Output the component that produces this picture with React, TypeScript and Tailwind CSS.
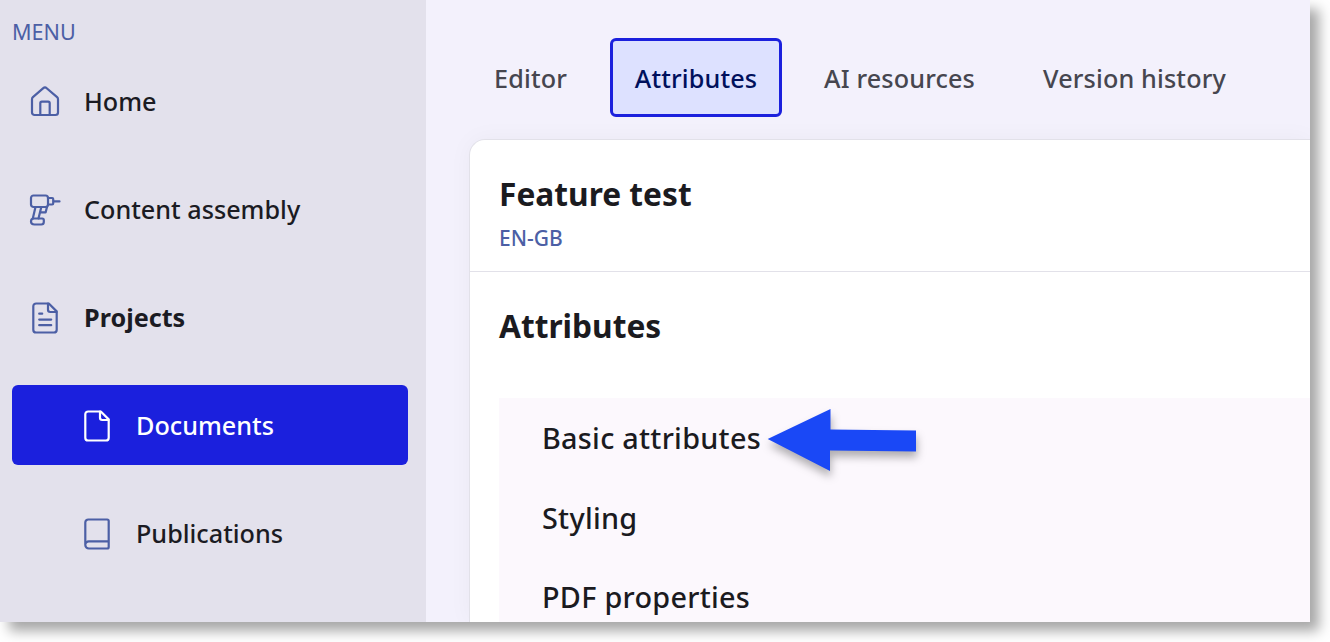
import React from "react";
import clsx from "clsx";

type IconProps = {
  className?: string;
};

type NavItemProps = {
  label: string;
  icon: React.ReactNode;
  nested?: boolean;
  active?: boolean;
  bold?: boolean;
};

const iconProps = {
  width: 32,
  height: 32,
  viewBox: "0 0 32 32",
  fill: "none",
  stroke: "currentColor",
  strokeWidth: 2.2,
  strokeLinecap: "round" as const,
  strokeLinejoin: "round" as const,
};

const HomeIcon = ({ className }: IconProps) => (
  <svg {...iconProps} className={className}>
    <path d="M3 13.200c0-.8.300-1.500.9-2L14.300 2.200c1-.9 2.400-.9 3.400 0L28.100 11.200c.6.500.9 1.200.9 2V26.500a2.500 2.500 0 0 1-2.500 2.500H5.500A2.500 2.500 0 0 1 3 26.500z" />
    <path d="M11.300 29V17.200a1.500 1.500 0 0 1 1.500-1.500h6.400a1.500 1.500 0 0 1 1.500 1.500V29" />
  </svg>
);

const DrillIcon = ({ className }: IconProps) => (
  <svg {...iconProps} className={className}>
    <rect x="2" y="1.500" width="17" height="11.500" rx="2.500" />
    <path d="M19 4h4.200a1 1 0 0 1 1 1v4.500a1 1 0 0 1-1 1H19M24.200 7.400h6.300" />
    <path d="M6.500 13L3.800 24.500M12.300 13L9.500 24.500M18 13l-1.400 5.400H11.200" />
    <path d="M4.800 24.500h8.500a1.500 1.500 0 0 1 1.500 1.500v2a2.500 2.500 0 0 1-2.500 2.500H5.500c-2 0-3.500-1.200-3.500-3 0-1.700 1.100-3 2.800-3z" />
  </svg>
);

const FileOutline = () => (
  <>
    <path d="M7.100 1.500H19.800L27.700 9.400V27.700a2.800 2.800 0 0 1-2.800 2.800H7.100a2.800 2.800 0 0 1-2.800-2.800V4.300a2.800 2.800 0 0 1 2.800-2.800z" />
    <path d="M19 1.700V7.800a2.200 2.200 0 0 0 2.200 2.200H27.500" />
  </>
);

const FileIcon = ({ className }: IconProps) => (
  <svg {...iconProps} className={className}>
    <FileOutline />
  </svg>
);

const FileTextIcon = ({ className }: IconProps) => (
  <svg {...iconProps} className={className}>
    <FileOutline />
    <path d="M10.200 11.700h3M10.200 17.600h12M10.200 23.200h12" />
  </svg>
);

const BookIcon = ({ className }: IconProps) => (
  <svg {...iconProps} className={className}>
    <path d="M4.300 27V4.500a3 3 0 0 1 3-3H26.200a1.500 1.500 0 0 1 1.500 1.500V29a1.500 1.500 0 0 1-1.500 1.500H7.800A3.500 3.500 0 0 1 4.300 27a3.500 3.500 0 0 1 3.500-3.600H27.500" />
  </svg>
);

const NavItem = ({ label, icon, nested, active, bold }: NavItemProps) => (
  <a
    className={clsx(
      "flex h-20 items-center gap-[23px] rounded-md pt-0.5 text-[25.2px]",
      nested ? "pl-[69px]" : "pl-[17px]",
      active ? "bg-[#1b20dd] text-white" : "text-[#1b1b23]",
      bold ? "font-bold" : "font-medium"
    )}
  >
    <span className={active ? "text-white" : "text-[#4c5fa5]"}>{icon}</span>
    <span>{label}</span>
  </a>
);

const Sidebar = () => (
  <aside className="w-[426px] shrink-0 bg-[#e3e1ec] pl-3 pr-[18px]">
    <div className="h-[61px] pt-4 text-[21.6px] leading-8 text-[#4c5fa5]">MENU</div>
    <nav className="flex flex-col gap-7">
      <NavItem label="Home" icon={<HomeIcon />} />
      <NavItem label="Content assembly" icon={<DrillIcon />} />
      <NavItem label="Projects" icon={<FileTextIcon />} bold />
      <NavItem label="Documents" icon={<FileIcon />} nested active />
      <NavItem label="Publications" icon={<BookIcon />} nested />
    </nav>
  </aside>
);

const Tabs = () => (
  <div className="ml-[43px] flex h-[79px] items-center whitespace-nowrap text-[25.2px] font-medium tracking-[0.15px] text-[#46464f]">
    <div className="w-[141px] pl-[25px] pt-0.5">Editor</div>
    <div className="flex h-[79px] w-[172px] items-center justify-center rounded-md border-3 border-[#1b20dd] bg-[#dde1ff] pt-0.5 text-[#00105c]">
      Attributes
    </div>
    <div className="ml-[42px] w-[219px] pt-0.5">AI resources</div>
    <div className="pt-0.5">Version history</div>
  </div>
);

const sections = ["Basic attributes", "Styling", "PDF properties"];

const Arrow = () => (
  <svg
    width="160"
    height="80"
    viewBox="0 0 160 80"
    className="absolute left-[264px] top-0 overflow-visible drop-shadow-[1px_6px_4px_rgba(0,0,0,0.3)]"
  >
    <path d="M4.700 41L67.500 11V31.500L153 32.500V53.500L67 52.500V73z" fill="#1a48f6" />
  </svg>
);

export default function App() {
  return (
    <div className="h-[642px] w-[1330px] overflow-hidden bg-white font-['Noto_Sans',sans-serif]">
      <div className="flex h-[622px] w-[1310px] shadow-[9px_9px_12px_rgba(0,0,0,0.35)]">
        <Sidebar />
        <main className="flex min-w-0 grow flex-col overflow-hidden bg-[#f3f1fc] pt-[38px]">
          <Tabs />
          <section className="ml-[43px] mt-[22px] grow rounded-tl-2xl border-l border-t border-[#e2e1e9] bg-white shadow-[0_0_24px_rgba(0,0,0,0.04)]">
            <header className="h-[132px] border-b border-[#e2e1e9] pl-[29px] pt-[31px]">
              <h1 className="text-[31.7px] font-bold leading-[46px] text-[#1b1b1f]">Feature test</h1>
              <p className="mt-[5px] text-[21px] font-medium leading-8 text-[#4c5fa5]">EN-GB</p>
            </header>
            <h2 className="mt-[31px] pl-[29px] text-[31.7px] font-bold leading-[46px] text-[#1b1b1f]">Attributes</h2>
            <div className="relative ml-[29px] mt-[49px] h-[224px] overflow-hidden bg-[#fcf8fd]">
              {sections.map((section) => (
                <div
                  key={section}
                  className="flex h-[79.5px] items-center pl-[43px] text-[28.8px] font-medium tracking-[0.27px] text-[#1b1b1f]"
                >
                  {section}
                </div>
              ))}
              <Arrow />
            </div>
          </section>
        </main>
      </div>
    </div>
  );
}
